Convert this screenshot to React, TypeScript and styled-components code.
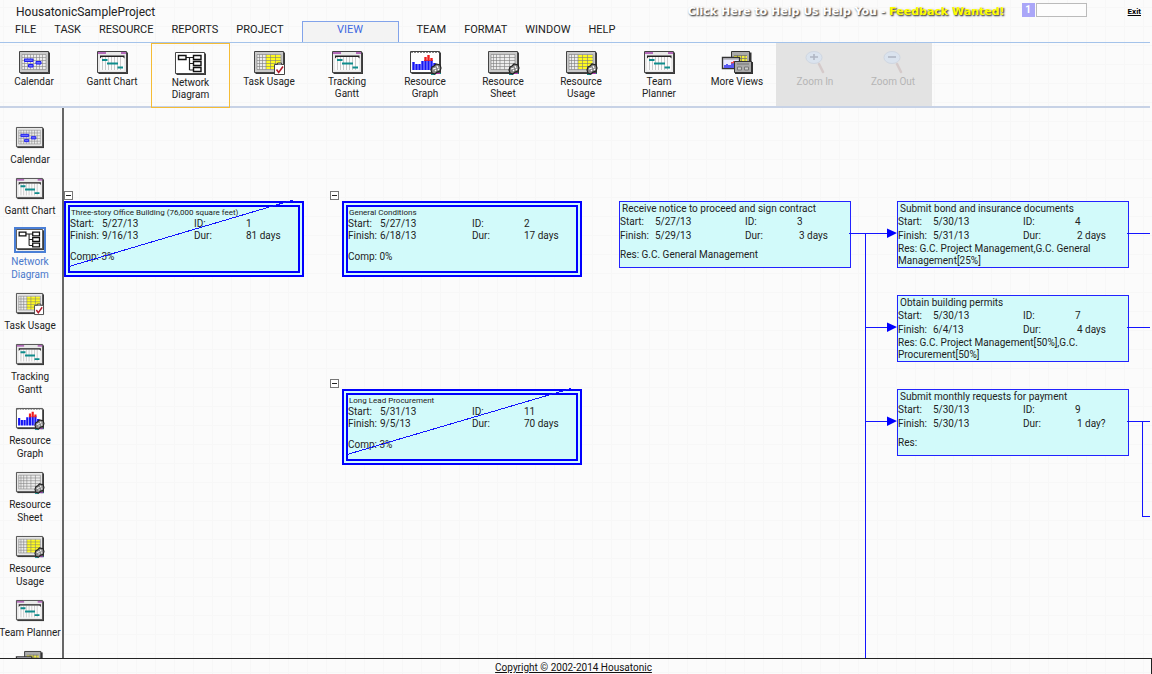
import React from "react";
import styled, { createGlobalStyle, css } from "styled-components";

const GlobalStyle = createGlobalStyle`
  * { box-sizing: border-box; }
  body {
    margin: 0;
    font-family: Roboto, "Liberation Sans", sans-serif;
    font-size: 10px;
    color: #222;
    background-color: #fbfbfb;
    background-image:
      linear-gradient(to right, #f7f7f7 1px, transparent 1px),
      linear-gradient(to bottom, #f7f7f7 1px, transparent 1px);
    background-size: 19px 19px;
    background-position: 3px 7px;
  }
  button {
    margin: 0;
    padding: 0;
    border: 0;
    background: none;
    font: inherit;
    color: inherit;
    cursor: pointer;
  }
`;

const Page = styled.div`
  display: flex;
  flex-direction: column;
  height: 100vh;
  overflow: hidden;
`;

const Shell = styled.div`
  display: flex;
  flex-direction: column;
  flex: 1;
  min-height: 0;
  margin-right: 2px;
`;

const TitleBar = styled.header`
  display: flex;
  align-items: center;
  height: 21px;
  padding: 2px 9px 0 16px;
`;

const ProjectName = styled.h1`
  flex: 1;
  margin: 0;
  font-size: 12px;
  line-height: 20px;
  font-weight: 400;
`;

const FeedbackLink = styled.a`
  font-family: "DejaVu Sans", sans-serif;
  font-size: 11px;
  line-height: 16px;
  font-weight: 700;
  color: #fff;
  text-decoration: none;
  text-shadow: 1px 1px 2px #444, 1px 1px 1px #888;
`;

const FeedbackAccent = styled.span`
  color: #ff0;
`;

const Counter = styled.label`
  display: flex;
  align-items: center;
  gap: 1px;
  height: 18px;
  padding-bottom: 4px;
  margin: 0 41px 0 17px;
`;

const CounterBadge = styled.span`
  width: 13px;
  height: 14px;
  line-height: 14px;
  text-align: center;
  font-weight: 700;
  color: #fff;
  background: #aaa6f8;
`;

const CounterInput = styled.input`
  width: 51px;
  height: 14px;
  padding: 0 2px;
  border: 1px solid #bbb;
  background: #fdfdfd;
  font: inherit;
`;

const ExitLink = styled.a`
  font-size: 8px;
  line-height: 16px;
  font-weight: 700;
  color: #000;
`;

const MenuBar = styled.nav`
  display: flex;
  height: 22px;
  padding-left: 6px;
  border-bottom: 1px solid #a4c3ea;
`;

const MenuItem = styled.button<{ $active?: boolean }>`
  padding: 0 9px 4px;
  font-size: 11px;
  line-height: 16px;
  ${(p) =>
    p.$active &&
    css`
      width: 97px;
      margin: 0 9px;
      color: #4169e1;
      background: #f3f3f3;
      border: 1px solid #82a3ea;
      border-bottom: 0;
    `}
`;

const Ribbon = styled.div`
  display: flex;
  flex: none;
  height: 65px;
  border-bottom: 2px solid #c7d2e6;
  margin-left: -5px;
`;

const RibbonButton = styled.button<{ $active?: boolean }>`
  display: flex;
  flex: none;
  flex-direction: column;
  align-items: center;
  gap: 1px;
  width: 78px;
  padding: 8px 9px 0;
  line-height: 12px;
  ${(p) =>
    p.$active &&
    css`
      width: 79px;
      margin-bottom: -2px;
      border: 1px solid #f5bc35;
    `}
  &:disabled {
    color: #b5b5b5;
    background: #e3e3e3;
    cursor: default;
  }
`;

const Workspace = styled.div`
  display: flex;
  flex: 1;
  min-height: 0;
`;

const Sidebar = styled.aside`
  display: flex;
  flex-direction: column;
  flex: none;
  gap: 12px;
  width: 64px;
  padding-top: 19px;
  overflow: hidden;
  border-right: 2px solid #666;
`;

const SidebarButton = styled.button<{ $active?: boolean }>`
  --frame: #e6e6e6;
  display: flex;
  flex-direction: column;
  flex: none;
  align-items: center;
  gap: 4px;
  margin: 0 -4px 0 -6px;
  padding: 0 4px;
  line-height: 13px;
  color: ${(p) => (p.$active ? "#4a78cc" : "inherit")};
  svg {
    outline: ${(p) => (p.$active ? "2px solid #4a7fd6" : "none")};
  }
`;

const SidebarLabel = styled.span<{ $oneLine: boolean }>`
  max-width: 64px;
  white-space: ${(p) => (p.$oneLine ? "nowrap" : "normal")};
`;

const IconArt = styled.svg<{ $small?: boolean }>`
  flex: none;
  display: block;
  overflow: visible;
  width: ${(p) => (p.$small ? 28 : 31)}px;
  height: ${(p) => (p.$small ? 22 : 24)}px;
`;

const Canvas = styled.main`
  position: relative;
  flex: 1;
  overflow: hidden;
`;

const Links = styled.svg`
  position: absolute;
  inset: 0;
  width: 100%;
  height: 100%;
  pointer-events: none;
`;

const NodeCard = styled.article<{ $summary: boolean }>`
  position: absolute;
  width: ${(p) => (p.$summary ? 240 : 232)}px;
  height: ${(p) => (p.$summary ? 76 : 67)}px;
  border: ${(p) => (p.$summary ? "6px double #00f" : "1px solid #2222ff")};
  background: #d2fafa;
`;

const NodeTitle = styled.h2<{ $summary: boolean }>`
  margin: 0;
  padding-left: ${(p) => (p.$summary ? 1 : 2)}px;
  font-weight: 400;
  white-space: nowrap;
  font-size: ${(p) => (p.$summary ? 8 : 10)}px;
  line-height: ${(p) => (p.$summary ? 11 : 13)}px;
`;

const NodeFields = styled.dl<{ $summary: boolean }>`
  display: grid;
  grid-template-columns: ${(p) => (p.$summary ? "32px 92px 52px 1fr" : "35px 90px 52px 1fr")};
  margin: 0;
  line-height: ${(p) => (p.$summary ? 12 : 14)}px;
  dt, dd { margin: 0; }
  dd:last-child { padding-left: ${(p) => (p.$summary ? 0 : 2)}px; }
`;

const NodeNote = styled.p<{ $summary: boolean }>`
  display: flex;
  align-items: center;
  height: ${(p) => (p.$summary ? 29 : 24)}px;
  margin: 0;
  line-height: 12px;
`;

const CollapseButton = styled.button`
  position: absolute;
  width: 9px;
  height: 9px;
  border: 1px solid #777;
  background: #fff;
  &::after {
    content: "";
    display: block;
    height: 1px;
    margin: 0 1px;
    background: #222;
  }
`;

const Footer = styled.footer`
  flex: none;
  height: 16px;
  padding-right: 4px;
  border: 1px solid #222;
  border-width: 1px 1px 0 0;
  line-height: 18px;
  text-align: center;
  a { color: #111; }
`;

/* ---------- icons ---------- */

const Frame = ({ fill = "var(--frame, #c9c9c9)" }: { fill?: string }) => (
  <>
    <path d="M1.500 1.500h29.500v21.500h-29.500z" fill="#3a3a3a" />
    <path d="M.5 .5h29v21h-29z" style={{ fill }} stroke="#444" />
  </>
);

const Grid = ({ yellow }: { yellow?: boolean }) => (
  <>
    <path d="M3 3.500h24v15H3z" fill="#ececec" />
    {yellow && <path d="M12 4h14.500v14H12z" fill="#fffb1e" />}
    <path
      d="M3 3.500h24v15H3zM3 6.500h24M3 9.500h24M3 12.500h24M3 15.500h24M5.500 3.500v15M8.500 3.500v15M12 3.500v15M16.500 3.500v15M21.500 3.500v15"
      fill="none"
      stroke="#7c7c7c"
      strokeWidth=".6"
    />
  </>
);

const Gear = () => (
  <>
    <path d="M21 23.500h4M27 22.500h4" stroke="#188" />
    <path d="M26 22.500h4" stroke="#a3a" />
    <path d="M22 16l2-1 2-2 4 1 1 3-1 3-3 1-2 2-3-1-1-3z" fill="#888" stroke="#222" strokeWidth="1.200" />
    <path d="M23 18l3-1M27 15l1 2M25 20l1-1M28 18l1 1" stroke="#fff" strokeWidth="1.200" />
  </>
);

const Gantt = () => (
  <>
    <Frame fill="#e9e9e9" />
    <path d="M3 6h24v13.500H3z" fill="#fbfbfb" />
    <path d="M1 2h8M24 2h5" stroke="#a040a8" strokeWidth="1.400" />
    <path d="M5.500 6v13M8.500 6v13M11.500 6v13M14.500 6v13M17.500 6v13M20.500 6v13M23.500 6v13" stroke="#bdbdbd" strokeWidth=".8" />
    <path d="M3 4.500h24.500v3l-1.500-1.500h-21.500l-1.500 1.500z" fill="#222" />
    <path d="M5 9h5.500M10 12.500h11M20.500 16.500h5.500" stroke="#0f8c8c" strokeWidth="2" />
  </>
);

const Lens = ({ plus }: { plus?: boolean }) => (
  <g opacity=".5">
    <path d="M14 13l4 8" stroke="#c9b3b3" strokeWidth="2.500" strokeLinecap="round" />
    <ellipse cx="9" cy="6.500" rx="8" ry="6" fill="#d3e3fa" stroke="#bccbe0" />
    <path d={plus ? "M5 6h8M9 3v6" : "M5 6h8"} stroke="#7f8ba5" strokeWidth="1.600" />
  </g>
);

const art: Record<string, React.ReactNode> = {
  calendar: (
    <>
      <Frame />
      <path d="M3 3.500h24v15H3z" fill="#ececec" />
      <path
        d="M3 3.500h24v15H3zM3 6.500h24M3 9.500h24M3 12.500h24M3 15.500h24M5.500 3.500v15M8.500 3.500v15M11.500 3.500v15M14.500 3.500v15M17.500 3.500v15M20.500 3.500v15M23.500 3.500v15"
        fill="none"
        stroke="#858585"
        strokeWidth=".6"
      />
      <path d="M5.500 8h8.500v2.500H5.500zM17 10.500h5v2.500h-5zM9.500 13.500h4.500v2.500H9.500z" fill="#6a6aff" stroke="#1c1cf0" />
    </>
  ),
  gantt: <Gantt />,
  network: (
    <>
      <Frame fill="#fff" />
      <path d="M11 5.500h7M14.500 5.500v12.500M14.500 11.500h4M14.500 18h4" fill="none" stroke="#222" strokeWidth="1.200" />
      <path d="M3.500 3.500h7.500v4H3.500zM18.500 3.500h7.500v4h-7.500zM18.500 9.500h7.500v4h-7.500zM18.500 15.500h7.500v4h-7.500z" fill="#fff" stroke="#111" strokeWidth="1.400" />
    </>
  ),
  taskUsage: (
    <>
      <Frame />
      <Grid yellow />
      <path d="M20.500 13.500h10v10h-10z" fill="#fff" stroke="#444" />
      <path d="M23.500 13.500v-1.500h4v1.500" fill="#ccc" stroke="#444" />
      <path d="M22.500 18.500l2.200 3L29 15.500" fill="none" stroke="#b01c2c" strokeWidth="1.600" />
    </>
  ),
  graph: (
    <>
      <Frame fill="#fff" />
      <path d="M1 1.500h28" stroke="#888" strokeDasharray="2 1" />
      <path d="M3.500 19v-8M6.500 19v-6M9.500 19v-6M12.500 19v-9M15.500 19v-10M18.500 19v-10M21.500 19v-10M24.500 19v-7" stroke="#1515f5" strokeWidth="2.400" />
      <path d="M15.500 10v-4M18.500 10v-6M21.500 10v-3" stroke="#f01c1c" strokeWidth="2.400" />
      <Gear />
    </>
  ),
  sheet: (
    <>
      <Frame />
      <Grid />
      <Gear />
    </>
  ),
  resourceUsage: (
    <>
      <Frame />
      <Grid yellow />
      <Gear />
    </>
  ),
  more: (
    <>
      <path d="M9.500 .5h18v12h-18z" fill="#aaa" stroke="#333" />
      <path d="M28.500 1.500v11" stroke="#333" strokeWidth="2" />
      <path d="M12 4.500h13v7H12z" fill="#f4ee3c" />
      <path d="M12 4.500h13M12 7.500h13M15.500 4v8M19.500 4v8M23 4v8" stroke="#777" strokeWidth=".8" />
      <path d="M.5 6.500h17v11h-17z" fill="#e9e9ff" stroke="#333" strokeWidth="1.400" />
      <path d="M1 8h16" stroke="#999" />
      <path d="M2 17v-3h2v-1h2v1h3v-2h2v-1h5v6z" fill="#5858f2" />
      <path d="M9 12.500v-1.500h2v-1h5v2z" fill="#ef5050" />
      <path d="M13 11h18v12H13z" fill="#333" />
      <path d="M12.500 10.500h17v11h-17z" fill="#aaa" stroke="#333" />
      <path d="M15 13h12" stroke="#777" />
      <path d="M15.500 16h4v3h-4zM22.500 16h4v3h-4z" fill="#ccc" stroke="#777" />
    </>
  ),
  zoomIn: <Lens plus />,
  zoomOut: <Lens />,
};

const Icon = ({ name, small }: { name: string; small?: boolean }) => (
  <IconArt
    $small={small}
    viewBox={name.startsWith("zoom") ? "-5 0 31 24" : "0 0 31 24"}
    preserveAspectRatio="none"
    aria-hidden="true"
  >
    {art[name]}
  </IconArt>
);

/* ---------- data ---------- */

const menus = ["FILE", "TASK", "RESOURCE", "REPORTS", "PROJECT", "VIEW", "TEAM", "FORMAT", "WINDOW", "HELP"];

interface View {
  icon: string;
  label: string;
  active?: boolean;
  oneLine?: boolean;
  iconOnly?: boolean;
}

const views: View[] = [
  { icon: "calendar", label: "Calendar" },
  { icon: "gantt", label: "Gantt Chart" },
  { icon: "network", label: "Network Diagram", active: true },
  { icon: "taskUsage", label: "Task Usage" },
  { icon: "gantt", label: "Tracking Gantt" },
  { icon: "graph", label: "Resource Graph" },
  { icon: "sheet", label: "Resource Sheet" },
  { icon: "resourceUsage", label: "Resource Usage" },
  { icon: "gantt", label: "Team Planner", oneLine: true },
  { icon: "more", label: "More Views", iconOnly: true },
];

const zooms = [
  { icon: "zoomIn", label: "Zoom In" },
  { icon: "zoomOut", label: "Zoom Out" },
];

interface Task {
  id: number;
  x: number;
  y: number;
  title: string;
  start: string;
  finish: string;
  dur: string;
  note: string;
  summary?: boolean;
}

const tasks: Task[] = [
  { id: 1, x: 0, y: 93, title: "Three-story Office Building (76,000 square feet)", start: "5/27/13", finish: "9/16/13", dur: "81 days", note: "Comp: 3%", summary: true },
  { id: 2, x: 278, y: 93, title: "General Conditions", start: "5/27/13", finish: "6/18/13", dur: "17 days", note: "Comp: 0%", summary: true },
  { id: 11, x: 278, y: 281, title: "Long Lead Procurement", start: "5/31/13", finish: "9/5/13", dur: "70 days", note: "Comp: 3%", summary: true },
  { id: 3, x: 555, y: 93, title: "Receive notice to proceed and sign contract", start: "5/27/13", finish: "5/29/13", dur: "3 days", note: "Res: G.C. General Management" },
  { id: 4, x: 833, y: 93, title: "Submit bond and insurance documents", start: "5/30/13", finish: "5/31/13", dur: "2 days", note: "Res: G.C. Project Management,G.C. General Management[25%]" },
  { id: 7, x: 833, y: 187, title: "Obtain building permits", start: "5/30/13", finish: "6/4/13", dur: "4 days", note: "Res: G.C. Project Management[50%],G.C. Procurement[50%]" },
  { id: 9, x: 833, y: 281, title: "Submit monthly requests for payment", start: "5/30/13", finish: "5/30/13", dur: "1 day?", note: "Res:" },
];

const TaskNode = ({ task }: { task: Task }) => {
  const summary = !!task.summary;
  return (
    <>
      {summary && (
        <CollapseButton
          aria-label={`Collapse ${task.title}`}
          style={{ left: Math.max(task.x - 12, 0), top: task.y - 10 }}
        />
      )}
      <NodeCard $summary={summary} style={{ left: task.x, top: task.y }}>
        <NodeTitle $summary={summary}>{task.title}</NodeTitle>
        <NodeFields $summary={summary}>
          <dt>Start:</dt>
          <dd>{task.start}</dd>
          <dt>ID:</dt>
          <dd>{task.id}</dd>
          <dt>Finish:</dt>
          <dd>{task.finish}</dd>
          <dt>Dur:</dt>
          <dd>{task.dur}</dd>
        </NodeFields>
        <NodeNote $summary={summary}>{task.note}</NodeNote>
      </NodeCard>
    </>
  );
};

export default function App() {
  return (
    <Page>
      <GlobalStyle />
      <Shell>
        <TitleBar>
          <ProjectName>HousatonicSampleProject</ProjectName>
          <FeedbackLink href="#feedback">
            Click Here to Help Us Help You - <FeedbackAccent>Feedback Wanted!</FeedbackAccent>
          </FeedbackLink>
          <Counter>
            <CounterBadge>1</CounterBadge>
            <CounterInput type="text" />
          </Counter>
          <ExitLink href="#exit">Exit</ExitLink>
        </TitleBar>
        <MenuBar>
          {menus.map((m) => (
            <MenuItem key={m} $active={m === "VIEW"}>
              {m}
            </MenuItem>
          ))}
        </MenuBar>
        <Ribbon role="toolbar">
          {views.map((v) => (
            <RibbonButton key={v.label} $active={v.active}>
              <Icon name={v.icon} />
              {v.label}
            </RibbonButton>
          ))}
          {zooms.map((z) => (
            <RibbonButton key={z.label} disabled>
              <Icon name={z.icon} />
              {z.label}
            </RibbonButton>
          ))}
        </Ribbon>
        <Workspace>
          <Sidebar>
            {views.map((v) => (
              <SidebarButton key={v.label} $active={v.active} aria-label={v.label}>
                <Icon name={v.icon} small />
                {!v.iconOnly && <SidebarLabel $oneLine={!!v.oneLine}>{v.label}</SidebarLabel>}
              </SidebarButton>
            ))}
          </Sidebar>
          <Canvas>
            {tasks.map((t) => (
              <TaskNode key={t.id} task={t} />
            ))}
            <Links fill="none" stroke="#1414ff" aria-hidden="true">
              <path
                shapeRendering="crispEdges"
                d="M785 125.500H825M801.500 125.500V2000M801.500 219.500H825M801.500 313.500H825M1063 125.500H1086M1063 219.500H1086M1063 313.500H1086M1078.500 313.500V408.500H1086"
              />
              <path d="M823 120.500l10 4.500-10 5zM823 214.500l10 4.500-10 5zM823 308.500l10 4.500-10 5z" fill="#00f" stroke="none" />
              <path d="M5 158.500L229 92M283 346.500L507 280.500" shapeRendering="crispEdges" />
            </Links>
          </Canvas>
        </Workspace>
      </Shell>
      <Footer>
        <a href="#copyright">Copyright © 2002-2014 Housatonic</a>
      </Footer>
    </Page>
  );
}
